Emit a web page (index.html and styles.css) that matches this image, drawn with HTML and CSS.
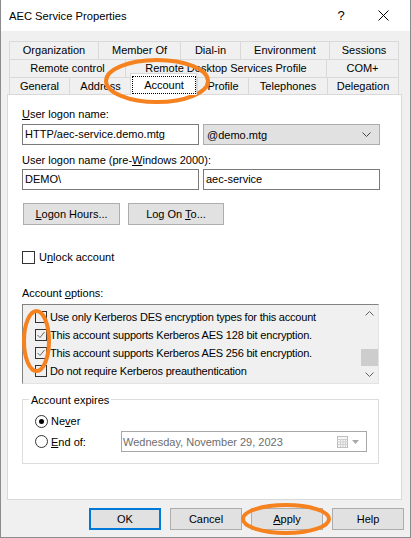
FILE: index.html
```html
<!DOCTYPE html>
<html lang="en">
<head>
    <meta charset="UTF-8">
    <link rel="stylesheet" href="styles.css">
    <title>AEC Service Properties</title>
</head>
<body>

<div class="window">
    <div class="titlebar">
        <span class="title">AEC Service Properties</span>
        <span class="help">?</span>
        <svg class="close" width="11" height="11" viewBox="0 0 11 11">
            <path d="M0.5 0.5 L10.5 10.5 M10.5 0.5 L0.5 10.5" stroke="#000" stroke-width="1" fill="none"/>
        </svg>
    </div>

    <!-- Pestañas en tres filas -->
    <div class="tabs">
        <div class="tab-row row-1">
            <div class="tab">Organization</div>
            <div class="tab">Member Of</div>
            <div class="tab">Dial-in</div>
            <div class="tab">Environment</div>
            <div class="tab">Sessions</div>
        </div>
        <div class="tab-row row-2">
            <div class="tab">Remote control</div>
            <div class="tab">Remote Desktop Services Profile</div>
            <div class="tab">COM+</div>
        </div>
        <div class="tab-row row-3">
            <div class="tab">General</div>
            <div class="tab">Address</div>
            <div class="tab active"><span class="focus">Account</span></div>
            <div class="tab">Profile</div>
            <div class="tab">Telephones</div>
            <div class="tab">Delegation</div>
        </div>
    </div>

    <div class="panel">
        <div class="field-label first"><u>U</u>ser logon name:</div>
        <div class="field-row">
            <div class="input">HTTP/aec-service.demo.mtg</div>
            <div class="select">
                <span>@demo.mtg</span>
                <svg width="9" height="5" viewBox="0 0 9 5">
                    <path d="M0.5 0.5 L4.5 4.5 L8.5 0.5" stroke="#444" fill="none"/>
                </svg>
            </div>
        </div>
        <div class="field-label second">User logon name (pre-<u>W</u>indows 2000):</div>
        <div class="field-row tight">
            <div class="input">DEMO\</div>
            <div class="input">aec-service</div>
        </div>

        <div class="button-row">
            <div class="btn logon"><u>L</u>ogon Hours...</div>
            <div class="btn logon-to">Log On <u>T</u>o...</div>
        </div>

        <div class="check-row">
            <span class="box"></span>
            <span>U<u>n</u>lock account</span>
        </div>

        <div class="field-label options">Account <u>o</u>ptions:</div>
        <div class="listbox">
            <div class="items">
                <div class="opt"><span class="mini-box"></span>Use only Kerberos DES encryption types for this account</div>
                <div class="opt"><span class="mini-box"><svg width="10" height="10" viewBox="0 0 10 10"><path d="M1.5 5 L4 7.5 L8.5 2" stroke="#666" fill="none"/></svg></span>This account supports Kerberos AES 128 bit encryption.</div>
                <div class="opt"><span class="mini-box"><svg width="10" height="10" viewBox="0 0 10 10"><path d="M1.5 5 L4 7.5 L8.5 2" stroke="#666" fill="none"/></svg></span>This account supports Kerberos AES 256 bit encryption.</div>
                <div class="opt"><span class="mini-box"></span>Do not require Kerberos preauthentication</div>
            </div>
            <div class="scrollbar">
                <div class="arrow">
                    <svg width="9" height="5" viewBox="0 0 9 5"><path d="M0.5 4.5 L4.5 0.5 L8.5 4.5" stroke="#606060" fill="none"/></svg>
                </div>
                <div class="track"><div class="thumb"></div></div>
                <div class="arrow">
                    <svg width="9" height="5" viewBox="0 0 9 5"><path d="M0.5 0.5 L4.5 4.5 L8.5 0.5" stroke="#606060" fill="none"/></svg>
                </div>
            </div>
        </div>

        <div class="group">
            <div class="legend">Account expires</div>
            <div class="radio-row">
                <span class="radio checked"></span>
                <span>Ne<u>v</u>er</span>
            </div>
            <div class="radio-row with-date">
                <span class="radio"></span>
                <span class="radio-text"><u>E</u>nd of:</span>
                <div class="date">
                    <span>Wednesday, November 29, 2023</span>
                    <svg class="cal" width="11" height="12" viewBox="0 0 11 12">
                        <rect x="0.5" y="0.5" width="10" height="11" fill="#f6f6f6" stroke="#bdbdbd"/>
                        <path d="M0.5 3.5 H10.5 M0.5 6 H10.5 M0.5 8.5 H10.5 M3.5 3.5 V11.5 M6 3.5 V11.5 M8.5 3.5 V11.5" stroke="#d0d0d0"/>
                    </svg>
                    <svg width="7" height="4" viewBox="0 0 7 4"><path d="M0 0 H7 L3.5 4 Z" fill="#a8a8a8"/></svg>
                </div>
            </div>
        </div>
    </div>

    <div class="dialog-buttons">
        <div class="btn default">OK</div>
        <div class="btn">Cancel</div>
        <div class="btn"><u>A</u>pply</div>
        <div class="btn">Help</div>
    </div>

    <!-- Marcas a mano en naranja -->
    <svg class="marks" width="411" height="538" viewBox="0 0 411 538">
        <ellipse cx="157" cy="81" rx="51" ry="21" fill="none" stroke="#f5821f" stroke-width="4"/>
        <ellipse cx="36.5" cy="341" rx="12.5" ry="30" fill="none" stroke="#f5821f" stroke-width="4"/>
        <ellipse cx="286" cy="519" rx="43" ry="14" fill="none" stroke="#f5821f" stroke-width="4"/>
    </svg>
</div>

</body>
</html>
```

FILE: styles.css
```css
body {
    margin: 0;
    font-family: "Liberation Sans", Arial, sans-serif;
    font-size: 11px;
    color: #000;
    background: #fff;
}

.window {
    position: relative;
    width: 411px;
    height: 538px;
    box-sizing: border-box;
    border: 1px solid #8c8c8c;
    border-top: 0;
    background: #f0f0f0;
    overflow: hidden;
}

.titlebar {
    height: 31px;
    background: #fff;
    display: flex;
    align-items: center;
    padding-left: 8px;
}

.title {
    flex: 1;
    font-size: 11.2px;
}

.help {
    width: 12px;
    text-align: center;
    font-size: 13px;
    margin-right: 31px;
}

.close {
    margin-right: 21px;
}

/* Pestañas */
.tabs {
    width: 390px;
    margin: 10px 0 -1px 8px;
}

.tab-row {
    display: grid;
    height: 18px;
}

.row-1 {
    grid-template-columns: 89px 82px 60px 89px 70px;
}

.row-2 {
    grid-template-columns: 116px 201px 73px;
}

.row-3 {
    grid-template-columns: 60px 62px 66px 51px 79px 72px;
}

.tab {
    border-top: 1px solid #d9d9d9;
    border-left: 1px solid #d9d9d9;
    text-align: center;
    line-height: 17px;
    white-space: nowrap;
}

.tab:last-child {
    border-right: 1px solid #d9d9d9;
}

.tab.active {
    position: relative;
    z-index: 1;
    height: 22px;
    box-sizing: border-box;
    margin-top: -4px;
    margin-left: -1px;
    background: #fff;
    border-right: 1px solid #d9d9d9;
}

.focus {
    display: block;
    margin: 2px 0 0 1px;
    border: 1px dotted #000;
    line-height: 16px;
}

/* Panel blanco */
.panel {
    width: 395px;
    height: 406px;
    margin-left: 6px;
    box-sizing: border-box;
    border: 1px solid #d9d9d9;
    background: #fff;
    padding-left: 14px;
}

.field-label {
    line-height: 14px;
}

.field-label.first {
    margin-top: 12px;
}

.field-label.second {
    margin-top: 8px;
}

.field-label.options {
    margin-top: 22px;
}

.field-row {
    display: flex;
    gap: 4px;
    height: 21px;
    margin-top: 3px;
}

.field-row.tight {
    margin-top: 2px;
}

.input {
    width: 177px;
    height: 21px;
    box-sizing: border-box;
    border: 1px solid #7a7a7a;
    padding-left: 2px;
    line-height: 19px;
    background: #fff;
}

.select {
    width: 177px;
    height: 21px;
    box-sizing: border-box;
    border: 1px solid #adadad;
    background: #e1e1e1;
    display: flex;
    align-items: center;
    justify-content: space-between;
    padding: 0 8px 0 3px;
}

.btn {
    height: 22px;
    box-sizing: border-box;
    border: 1px solid #adadad;
    background: #e1e1e1;
    text-align: center;
    line-height: 20px;
}

.button-row {
    display: flex;
    gap: 8px;
    margin-top: 13px;
    padding-left: 1px;
}

.btn.logon {
    width: 97px;
}

.btn.logon-to {
    width: 96px;
}

.check-row {
    display: flex;
    align-items: center;
    height: 14px;
    margin-top: 25px;
}

.box {
    width: 13px;
    height: 13px;
    box-sizing: border-box;
    border: 1px solid #333;
    background: #fff;
    margin-right: 4px;
}

/* Lista de opciones con scroll */
.listbox {
    display: flex;
    width: 357px;
    height: 80px;
    box-sizing: border-box;
    margin-top: 4px;
    border: 1px solid;
    border-color: #828282 #e3e3e3 #e3e3e3 #828282;
    background: #f0f0f0;
}

.items {
    flex: 1;
    padding: 3px 0 0 12px;
    overflow: hidden;
    letter-spacing: -0.2px;
}

.opt {
    display: flex;
    align-items: center;
    height: 18px;
    white-space: nowrap;
}

.mini-box {
    width: 12px;
    height: 12px;
    box-sizing: border-box;
    border: 1px solid #333;
    margin-right: 3px;
    display: flex;
    align-items: center;
    justify-content: center;
}

.scrollbar {
    width: 17px;
    display: flex;
    flex-direction: column;
}

.arrow {
    height: 17px;
    display: flex;
    align-items: center;
    justify-content: center;
}

.track {
    flex: 1;
}

.thumb {
    height: 17px;
    margin-top: 27px;
    background: #cdcdcd;
}

/* Caducidad de la cuenta */
.group {
    width: 357px;
    height: 65px;
    box-sizing: border-box;
    margin-top: 15px;
    border: 1px solid #dcdcdc;
    padding-left: 12px;
}

.legend {
    display: table;
    margin: -7px 0 0 -6px;
    padding: 0 2px;
    background: #fff;
    line-height: 14px;
}

.radio-row {
    display: flex;
    align-items: center;
    height: 14px;
    margin-top: 7px;
}

.radio-row.with-date {
    height: 21px;
    margin-top: 3px;
}

.radio {
    width: 13px;
    height: 13px;
    box-sizing: border-box;
    border: 1px solid #333;
    border-radius: 50%;
    margin-right: 3px;
    display: flex;
    align-items: center;
    justify-content: center;
}

.radio.checked::after {
    content: "";
    width: 5px;
    height: 5px;
    border-radius: 50%;
    background: #000;
}

.radio-text {
    width: 70px;
}

.date {
    width: 246px;
    height: 21px;
    box-sizing: border-box;
    border: 1px solid #a8a8a8;
    display: flex;
    align-items: center;
    padding: 0 7px 0 1px;
    color: #6d6d6d;
}

.date .cal {
    margin-left: auto;
    margin-right: 4px;
}

/* Botones del diálogo */
.dialog-buttons {
    display: flex;
    justify-content: flex-end;
    gap: 9px;
    margin-top: 8px;
    padding-right: 6px;
}

.dialog-buttons .btn {
    width: 72px;
}

.btn.default {
    border: 2px solid #0078d7;
    line-height: 18px;
}

.marks {
    position: absolute;
    left: -1px;
    top: 0;
    pointer-events: none;
}
```
